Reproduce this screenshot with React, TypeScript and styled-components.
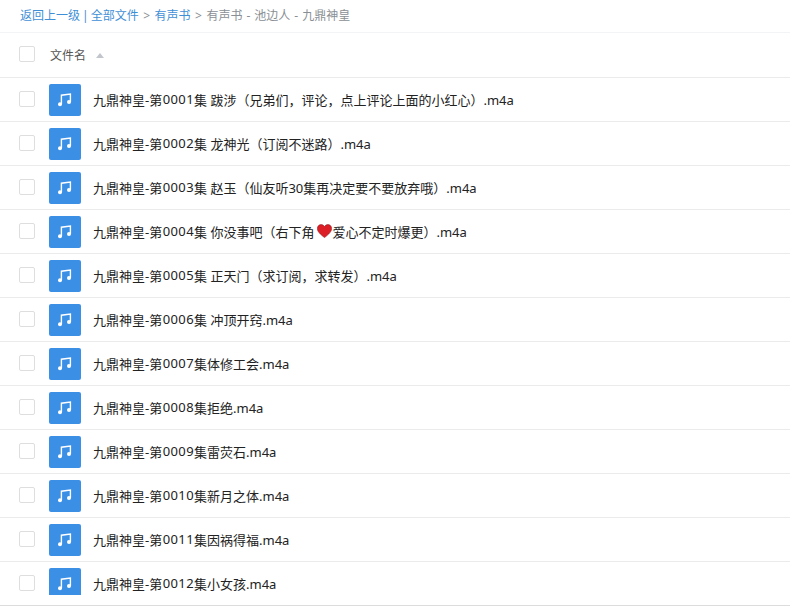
import React from "react";
import styled, { createGlobalStyle } from "styled-components";

const GlobalStyle = createGlobalStyle`
  html, body {
    margin: 0;
    padding: 0;
    background: #fff;
    overflow: hidden;
  }
  body {
    font-family: "Noto Sans", "Noto Sans CJK SC", sans-serif;
  }
`;

const Page = styled.div`
  width: 790px;
  height: 606px;
  display: flex;
  flex-direction: column;
  border-bottom: 1px solid #dcdcdc;
  box-sizing: border-box;
`;

const Breadcrumb = styled.div`
  height: 33px;
  box-sizing: border-box;
  border-bottom: 1px solid #f2f4f5;
  padding: 0 0 2px 20px;
  display: flex;
  align-items: center;
  font-size: 12px;
  color: #8a8f94;
  white-space: pre;
`;

const Crumb = styled.span`
  color: #3f8fd6;
`;

const Divider = styled.span`
  color: #3f8fd6;
  margin: 0 2px;
`;

const Chevron = styled.span`
  margin: 0 4.5px;
`;

const Dash = styled.span`
  margin: 0 4px;
`;

const HeaderRow = styled.div`
  height: 45px;
  box-sizing: border-box;
  border-bottom: 1px solid #ebebeb;
  display: flex;
  align-items: center;
  padding-left: 19px;
`;

const Check = styled.span`
  width: 14px;
  height: 14px;
  border: 1px solid #dedede;
  border-radius: 2px;
  background: #fff;
  flex: none;
  margin-bottom: 2px;
`;

const HeaderLabel = styled.span`
  margin-left: 15px;
  font-size: 12px;
  color: #555;
`;

const SortArrow = styled.span`
  margin-left: 10px;
  width: 0;
  height: 0;
  border-left: 4px solid transparent;
  border-right: 4px solid transparent;
  border-bottom: 5px solid #c2c6cc;
`;

const List = styled.div`
  height: 517px;
  overflow: hidden;
`;

const Row = styled.div`
  height: 44px;
  box-sizing: border-box;
  border-bottom: 1px solid #ebebeb;
  display: flex;
  align-items: center;
  padding-left: 19px;
`;

const FileIcon = styled.span`
  margin-left: 14px;
  width: 32px;
  height: 32px;
  border-radius: 2px;
  background: #3b90e6;
  flex: none;
  display: flex;
  align-items: center;
  justify-content: center;
`;

const FileName = styled.span`
  margin: 0 0 1px 12px;
  font-size: 13px;
  color: #222;
  white-space: pre;
  display: flex;
  align-items: center;
`;

const EpisodeNumber = styled.span`
  letter-spacing: 0.4px;
  margin-left: 0.5px;
`;

const Heart = styled.svg`
  width: 15px;
  height: 14px;
  margin: 0 0.5px 0 2.5px;
  flex: none;
`;

function MusicIcon() {
  return (
    <svg width="14" height="14" viewBox="0 0 14 14" fill="none">
      <path d="M3.4 11V2.200L12.400 1v7.800" stroke="#fff" strokeWidth="1.400" />
      <circle cx="2" cy="11.300" r="2" fill="#fff" />
      <circle cx="11" cy="9" r="2" fill="#fff" />
    </svg>
  );
}

function HeartIcon() {
  return (
    <Heart viewBox="0 0 15 14">
      <path
        d="M7.500 13.600C3 10 .4 7.600.4 4.500.4 2.200 2.100.6 4.100.6c1.400 0 2.600.7 3.400 2 .8-1.300 2-2 3.400-2 2 0 3.700 1.600 3.700 3.900 0 3.100-2.600 5.500-7.100 9.100z"
        fill="#dc1f26"
        stroke="#8e1a1e"
        strokeWidth="0.6"
      />
    </Heart>
  );
}

const files: { num: string; title: React.ReactNode }[] = [
  { num: "0001", title: "集 跋涉（兄弟们，评论，点上评论上面的小红心）.m4a" },
  { num: "0002", title: "集 龙神光（订阅不迷路）.m4a" },
  { num: "0003", title: "集 赵玉（仙友听30集再决定要不要放弃哦）.m4a" },
  {
    num: "0004",
    title: (
      <>
        集 你没事吧（右下角
        <HeartIcon />
        爱心不定时爆更）.m4a
      </>
    ),
  },
  { num: "0005", title: "集 正天门（求订阅，求转发）.m4a" },
  { num: "0006", title: "集 冲顶开窍.m4a" },
  { num: "0007", title: "集体修工会.m4a" },
  { num: "0008", title: "集拒绝.m4a" },
  { num: "0009", title: "集雷荧石.m4a" },
  { num: "0010", title: "集新月之体.m4a" },
  { num: "0011", title: "集因祸得福.m4a" },
  { num: "0012", title: "集小女孩.m4a" },
];

export default function App() {
  return (
    <Page>
      <GlobalStyle />
      <Breadcrumb>
        <Crumb>返回上一级</Crumb>
        <Divider>|</Divider>
        <Crumb>全部文件</Crumb>
        <Chevron>&gt;</Chevron>
        <Crumb>有声书</Crumb>
        <Chevron>&gt;</Chevron>
        有声书
        <Dash>-</Dash>
        池边人
        <Dash>-</Dash>
        九鼎神皇
      </Breadcrumb>
      <HeaderRow>
        <Check />
        <HeaderLabel>文件名</HeaderLabel>
        <SortArrow />
      </HeaderRow>
      <List>
        {files.map((file) => (
          <Row key={file.num}>
            <Check />
            <FileIcon>
              <MusicIcon />
            </FileIcon>
            <FileName>
              九鼎神皇-第<EpisodeNumber>{file.num}</EpisodeNumber>
              {file.title}
            </FileName>
          </Row>
        ))}
      </List>
    </Page>
  );
}
